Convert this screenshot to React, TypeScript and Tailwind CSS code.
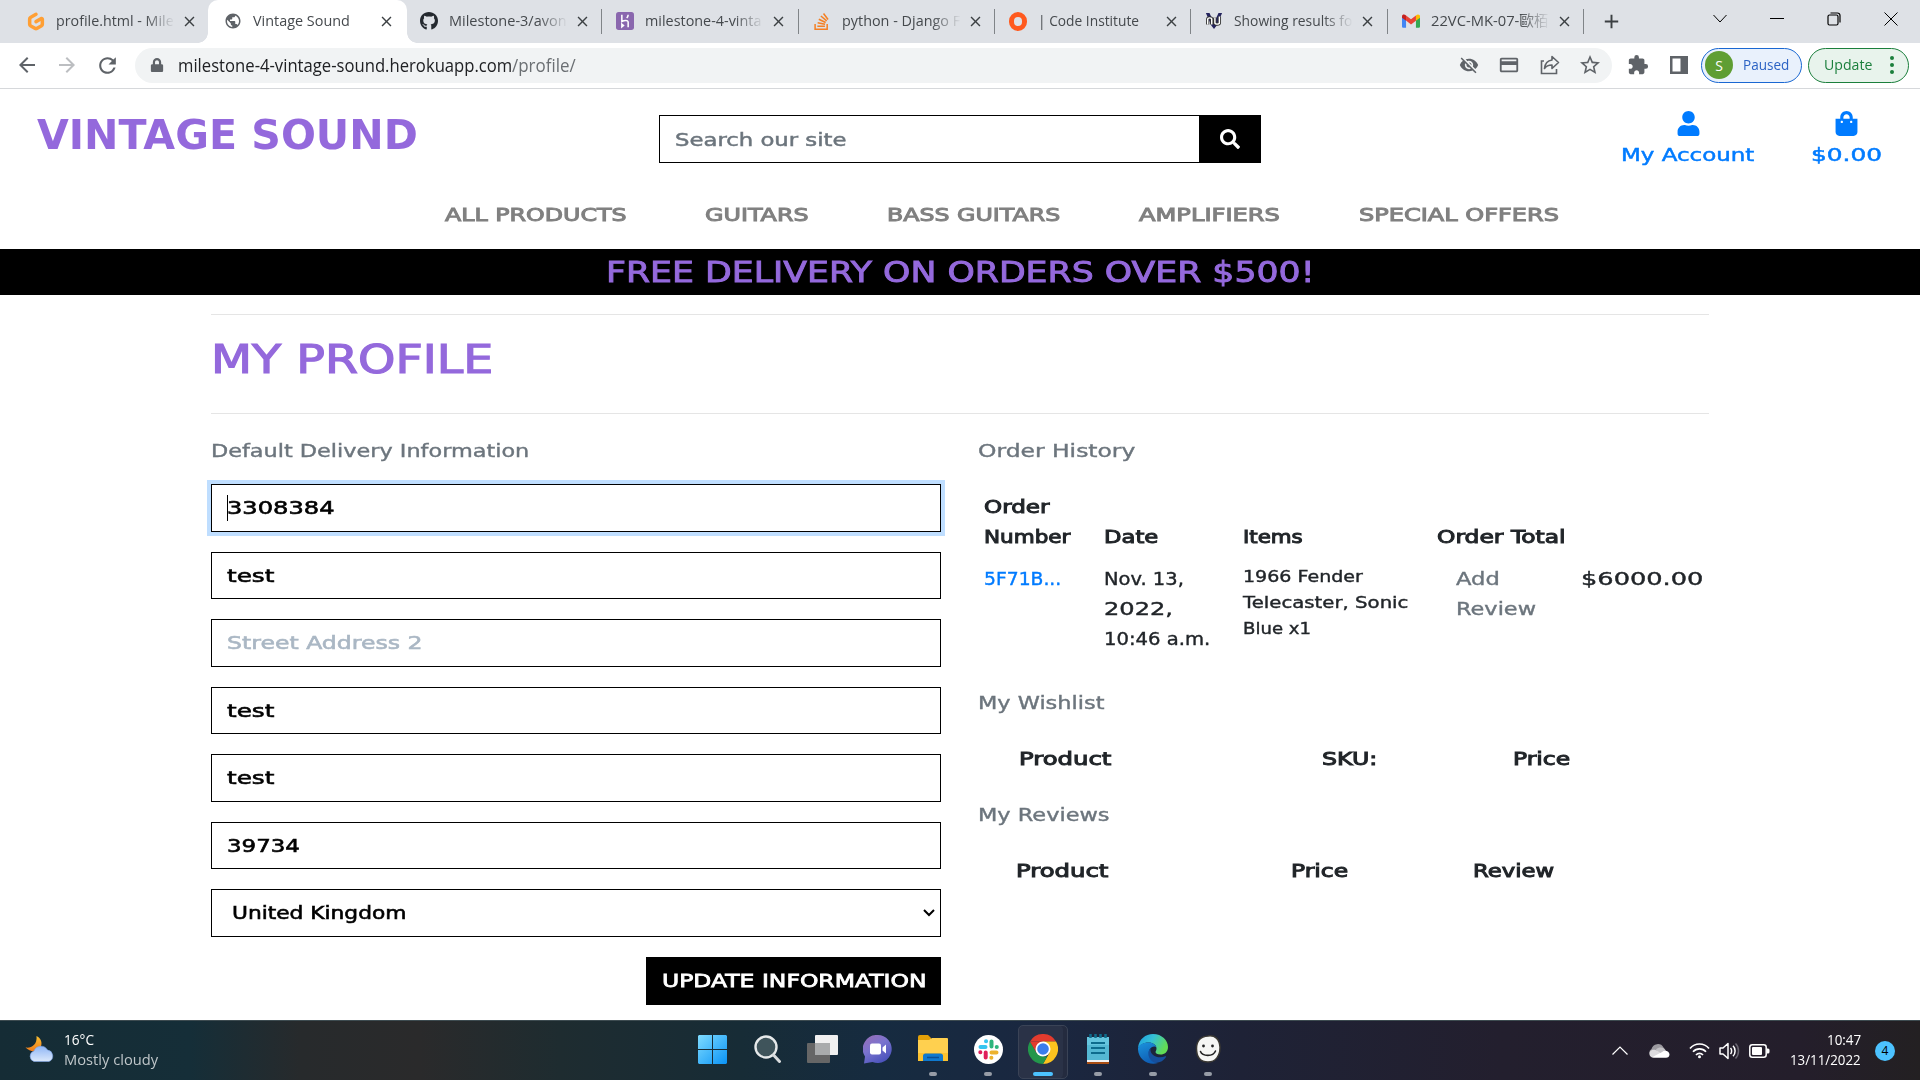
import { useLayoutEffect, useRef, useState, type ReactNode } from "react";
import { FaGithub, FaSearch, FaUser, FaShoppingBag, FaLock } from "react-icons/fa";
import { SiGitpod, SiStackoverflow } from "react-icons/si";
import {
  MdArrowBack,
  MdArrowForward,
  MdRefresh,
  MdVisibilityOff,
  MdStarBorder,
  MdExtension,
  MdPublic,
  MdClose,
  MdAdd,
  MdOutlineCreditCard,
} from "react-icons/md";

/* Single-line text fitted to a given width. */
function Fit({ w, className = "", children }: { w: number; className?: string; children: ReactNode }) {
  const ref = useRef<HTMLSpanElement>(null);
  const [scale, setScale] = useState(1);
  useLayoutEffect(() => {
    const measure = () => {
      if (ref.current) setScale(w / ref.current.offsetWidth);
    };
    measure();
    document.fonts?.ready.then(measure);
  }, [w]);
  return (
    <span className={`block shrink-0 whitespace-nowrap ${className}`} style={{ width: w }}>
      <span ref={ref} className="inline-block origin-left" style={{ transform: `scaleX(${scale})` }}>
        {children}
      </span>
    </span>
  );
}

function HerokuIcon() {
  return (
    <svg width="20" height="20" viewBox="0 0 20 20">
      <rect width="20" height="20" rx="3" fill="#8a67ae" />
      <path d="M6.500 3v7.500c2-1 7-2.400 7 1V17M6.500 13.500v3l1.800-1.500zM13.500 3c0 1.500-.6 2.600-1.600 3.600" fill="none" stroke="#fff" strokeWidth="1.700" />
    </svg>
  );
}

function VuIcon() {
  return (
    <svg width="20" height="20" viewBox="0 0 20 20">
      <path d="M1 1h4l5 11 5-11h4l-6 14-3 4-3-4z" fill="#25245e" />
      <path d="M3 14V8c0-2 4.500-2 4.500 0v6M11 6v6c0 2 5 2 5 0V5" fill="none" stroke="#333" strokeWidth="3.600" />
      <path d="M3 14V8c0-2 4.500-2 4.500 0v6M11 6v6c0 2 5 2 5 0V5" fill="none" stroke="#fff" strokeWidth="1.600" />
    </svg>
  );
}

function GmailIcon() {
  return (
    <svg width="20" height="16" viewBox="0 0 20 15">
      <path d="M0 2v11.500C0 14.300.7 15 1.500 15H4.500V6z" fill="#4285f4" />
      <path d="M20 2v11.500c0 .8-.7 1.500-1.500 1.500h-3V6z" fill="#34a853" />
      <path d="M15.500 1.300C17.500-.5 20 .3 20 2.300v1.500L15.500 7.200z" fill="#fbbc04" />
      <path d="M4.500 7V1.300L10 5.500l5.500-4.200V7.200L10 11.400z" fill="#ea4335" />
      <path d="M0 2.200C0 .2 2.500-.5 4.500 1.300V7.200L0 3.800z" fill="#c5221f" />
    </svg>
  );
}

const tabs: { title: string; w: number; icon: ReactNode; active?: boolean; line?: boolean; fade?: boolean }[] = [
  { title: "profile.html - Mile", w: 118, icon: <SiGitpod size={21} color="#ff9f34" />, fade: true },
  { title: "Vintage Sound", w: 97, icon: <MdPublic size={22} color="#5f6368" />, active: true },
  { title: "Milestone-3/avon", w: 118, icon: <FaGithub size={20} color="#24292f" />, line: true, fade: true },
  { title: "milestone-4-vinta", w: 116, icon: <HerokuIcon />, line: true, fade: true },
  { title: "python - Django F", w: 118, icon: <SiStackoverflow size={17} color="#f48024" />, line: true, fade: true },
  { title: "| Code Institute", w: 101, icon: <span className="size-[19px] rounded-full border-[5px] border-[#ff5a1f]" />, line: true },
  { title: "Showing results fo", w: 118, icon: <VuIcon />, line: true, fade: true },
  { title: "22VC-MK-07-歐栢", w: 118, icon: <GmailIcon />, line: true, fade: true },
];

function TabStrip() {
  return (
    <div className="flex h-[43px] bg-[#dee1e6] pl-[13px]">
      {tabs.map((t) => (
        <div
          key={t.title}
          className={
            t.active
              ? "relative -mx-px flex w-[198.400px] items-center rounded-t-[10px] bg-white pb-px pl-[16px]"
              : "relative flex w-[196.400px] items-center pb-px pl-[14px]"
          }
        >
          {t.active && (
            <>
              <span className="absolute bottom-0 -left-[10px] size-[10px] bg-[radial-gradient(circle_at_0_0,#dee1e6_9.500px,#fff_10px)]" />
              <span className="absolute -right-[10px] bottom-0 size-[10px] bg-[radial-gradient(circle_at_100%_0,#dee1e6_9.500px,#fff_10px)]" />
            </>
          )}
          <span className="flex w-[18px] shrink-0 items-center justify-center">{t.icon}</span>
          <span
            className={
              t.fade
                ? "ml-[11px] w-[119px] overflow-hidden pb-[3px] [mask-image:linear-gradient(to_right,#000_75%,transparent)]"
                : "ml-[11px] w-[119px] overflow-hidden pb-[3px]"
            }
          >
            <Fit w={t.w} className="text-[15px] leading-5 text-[#45494d]">
              {t.title}
            </Fit>
          </span>
          <MdClose size={17} className="ml-[6px] shrink-0 text-[#3c4043]" />
          {t.line && <span className="absolute top-[9px] right-0 h-[25px] w-px bg-[#808488]" />}
        </div>
      ))}
      <div className="flex w-[54px] items-center justify-center pb-px">
        <MdAdd size={23} className="text-[#3c4043]" />
      </div>
      <div className="ml-auto flex h-[37px] items-center pr-px text-black">
        <span className="flex w-[57px] justify-center">
          <svg width="14" height="9" viewBox="0 0 14 9" fill="none" stroke="currentColor">
            <path d="M.5 1 7 8l6.500-7" />
          </svg>
        </span>
        <span className="flex w-[57px] justify-center">
          <span className="h-px w-[14px] bg-black" />
        </span>
        <span className="flex w-[57px] justify-center">
          <svg width="14" height="14" viewBox="0 0 14 14" fill="none" stroke="currentColor" strokeWidth="1.200">
            <rect x="1" y="3" width="10" height="10" rx="1.500" />
            <path d="M3.500 1h7A2.500 2.500 0 0 1 13 3.500v7" />
          </svg>
        </span>
        <span className="flex w-[57px] justify-center">
          <svg width="14" height="14" viewBox="0 0 14 14" fill="none" stroke="currentColor">
            <path d="m.5.5 13 13M13.500.5l-13 13" />
          </svg>
        </span>
      </div>
    </div>
  );
}

function Toolbar() {
  return (
    <div className="flex h-[46px] items-center border-b border-[#d6d8db] pr-[10px] pb-px pl-[15px] text-[#5f6368]">
      <MdArrowBack size={24} className="shrink-0" />
      <MdArrowForward size={24} className="ml-4 shrink-0 text-[#bcbec1]" />
      <MdRefresh size={25} className="ml-4 shrink-0" />
      <div className="ml-[15px] flex h-[35px] w-[1477px] shrink-0 items-center rounded-full bg-[#f1f3f4] pr-[10px] pl-[15px]">
        <FaLock size={14} className="shrink-0" />
        <Fit w={334} className="ml-[14px] pb-px text-[18px] leading-6 text-[#202124]">
          milestone-4-vintage-sound.herokuapp.com
        </Fit>
        <Fit w={64} className="pb-px text-[18px] leading-6 text-[#6b6f73]">
          /profile/
        </Fit>
        <div className="ml-auto flex items-center">
          <MdVisibilityOff size={20} />
          <MdOutlineCreditCard size={22} className="ml-[19px]" />
          <svg width="20" height="20" viewBox="0 0 20 20" fill="none" stroke="currentColor" strokeWidth="1.600" className="ml-[20px]">
            <path d="M4 6H1.500v12.500h15V14" />
            <path d="M12 5V1.500l6.500 6-6.500 6V10c-4 0-6 1.200-7.500 3.500C5 9 7.500 5.500 12 5z" strokeLinejoin="round" />
          </svg>
          <MdStarBorder size={24} className="ml-[18px]" />
        </div>
      </div>
      <MdExtension size={22} className="ml-[15px] shrink-0" />
      <svg width="18" height="18" viewBox="0 0 18 18" className="ml-[21px] shrink-0" fill="currentColor">
        <path d="M0 0h18v18H0zM2.500 2.500v13h8v-13z" fillRule="evenodd" />
      </svg>
      <div className="ml-[13px] flex h-[35px] w-[101px] shrink-0 items-center rounded-full border border-[#1967d2] bg-[#e9f1fc] pl-[3px]">
        <span className="flex size-[28px] items-center justify-center rounded-full bg-[#5f9e33] text-[14px] text-white">S</span>
        <Fit w={46} className="ml-[10px] pb-[3px] text-[15px] leading-5 text-[#2b62c4]">
          Paused
        </Fit>
      </div>
      <div className="ml-[6px] flex h-[35px] w-[101px] shrink-0 items-center rounded-full border border-[#1b7f3c] bg-[#e8f3ec] pl-[15px] text-[#1b7f3c]">
        <Fit w={48} className="pb-[3px] text-[15px] leading-5">
          Update
        </Fit>
        <span className="ml-[18px] flex flex-col gap-[3px]">
          <span className="size-[4px] rounded-full bg-current" />
          <span className="size-[4px] rounded-full bg-current" />
          <span className="size-[4px] rounded-full bg-current" />
        </span>
      </div>
    </div>
  );
}

function SiteHeader() {
  return (
    <header className="h-[160px] font-['DejaVu_Sans',sans-serif]">
      <div className="flex h-[90px] items-start">
        <Fit w={381} className="mt-[21px] ml-[37px] text-[41px] leading-[50px] font-bold text-[#9469dc]">
          VINTAGE SOUND
        </Fit>
        <div className="mt-[26px] ml-[241px] flex h-[48px] w-[602px]">
          <div className="flex w-[540px] items-center border border-r-0 border-black pt-px pl-[15px]">
            <Fit w={171} className="text-[18.500px] leading-[30px] text-[#6c757d] [-webkit-text-stroke:0.500px]">
              Search our site
            </Fit>
          </div>
          <div className="flex w-[62px] items-center justify-center bg-black text-white">
            <FaSearch size={20} />
          </div>
        </div>
        <div className="mt-[22px] ml-[360px] flex flex-col items-center text-[#007bff]">
          <FaUser size={25} />
          <Fit w={134} className="mt-1 text-[18.500px] leading-[30px] [-webkit-text-stroke:0.500px]">
            My Account
          </Fit>
        </div>
        <div className="mt-[22px] ml-[56px] flex flex-col items-center text-[#007bff]">
          <FaShoppingBag size={25} />
          <Fit w={71} className="mt-1 text-[18.500px] leading-[30px] [-webkit-text-stroke:0.500px]">
            $0.00
          </Fit>
        </div>
      </div>
      <nav className="mt-[21px] ml-[445px] flex gap-[79px] text-[18.500px] leading-[30px] text-[#808080] [-webkit-text-stroke:1px]">
        <Fit w={181}>ALL PRODUCTS</Fit>
        <Fit w={103}>GUITARS</Fit>
        <Fit w={173}>BASS GUITARS</Fit>
        <Fit w={141}>AMPLIFIERS</Fit>
        <Fit w={200}>SPECIAL OFFERS</Fit>
      </nav>
    </header>
  );
}

function Field({ value, w, focused, muted }: { value: string; w: number; focused?: boolean; muted?: boolean }) {
  return (
    <div
      className={
        focused
          ? "flex h-[47.500px] items-center border border-black pl-[15px] shadow-[0_0_0_4px_#bfdeff]"
          : "flex h-[47.500px] items-center border border-black pl-[15px]"
      }
    >
      {focused && <span className="-mr-px h-[26px] w-px bg-black" />}
      <Fit w={w} className={muted ? "text-[#aab7c4] [-webkit-text-stroke:0.6px]" : "text-black [-webkit-text-stroke:0.6px]"}>
        {value}
      </Fit>
    </div>
  );
}

function Profile() {
  return (
    <main className="mx-auto w-[1498px] pt-[19px] font-['DejaVu_Sans',sans-serif] text-[18.500px] leading-[30px] text-[#212529]">
      <hr className="border-[#e5e5e5]" />
      <Fit w={283} className="mt-[20px] text-[38.500px] leading-[50px] text-[#9469dc] [-webkit-text-stroke:1.200px]">
        MY PROFILE
      </Fit>
      <hr className="mt-[28px] border-[#e5e5e5]" />
      <div className="mt-[21.600px] flex gap-[37px]">
        <section className="w-[730px]">
          <Fit w={318} className="text-[#6c757d] [-webkit-text-stroke:0.4px]">
            Default Delivery Information
          </Fit>
          <div className="mt-[18.900px] flex flex-col gap-5">
            <Field value="3308384" w={107} focused />
            <Field value="test" w={48} />
            <Field value="Street Address 2" w={195} muted />
            <Field value="test" w={48} />
            <Field value="test" w={48} />
            <Field value="39734" w={73} />
            <div className="flex h-[47.500px] items-center justify-between border border-black pr-[5px] pl-[20px]">
              <Fit w={175} className="text-black [-webkit-text-stroke:0.6px]">
                United Kingdom
              </Fit>
              <svg width="12" height="8" viewBox="0 0 12 8" fill="none" stroke="#000" strokeWidth="2">
                <path d="m1 1 5 5 5-5" />
              </svg>
            </div>
            <div className="flex h-[48px] w-[295px] items-center justify-center self-end bg-black text-white">
              <Fit w={264} className="[-webkit-text-stroke:0.8px]">
                UPDATE INFORMATION
              </Fit>
            </div>
          </div>
        </section>
        <section className="w-[731px]">
          <Fit w={157} className="text-[#6c757d] [-webkit-text-stroke:0.4px]">
            Order History
          </Fit>
          <div className="mt-[26px] grid grid-cols-[120px_138.500px_194.500px_143.500px_122px] items-end pl-[6px] [-webkit-text-stroke:1px]">
            <div>
              <Fit w={66}>Order</Fit>
              <Fit w={86}>Number</Fit>
            </div>
            <Fit w={54}>Date</Fit>
            <Fit w={60}>Items</Fit>
            <Fit w={129}>Order Total</Fit>
          </div>
          <div className="mt-3 grid grid-cols-[120px_138.500px_194.500px_143.500px_122px] items-start pl-[6px] [-webkit-text-stroke:0.4px]">
            <Fit w={77} className="text-[#007bff]">
              5F71B...
            </Fit>
            <div>
              <Fit w={80}>Nov. 13,</Fit>
              <Fit w={69}>2022,</Fit>
              <Fit w={106}>10:46 a.m.</Fit>
            </div>
            <div className="text-[16.500px] leading-[26px]">
              <Fit w={120}>1966 Fender</Fit>
              <Fit w={166}>Telecaster, Sonic</Fit>
              <Fit w={68}>Blue x1</Fit>
            </div>
            <div className="pl-[19px] text-[#6c757d]">
              <Fit w={44}>Add</Fit>
              <Fit w={80}>Review</Fit>
            </div>
            <Fit w={122}>$6000.00</Fit>
          </div>
          <Fit w={126} className="mt-[34px] text-[#6c757d] [-webkit-text-stroke:0.4px]">
            My Wishlist
          </Fit>
          <div className="mt-[26px] grid grid-cols-[302.500px_191px_auto] pl-[41px] [-webkit-text-stroke:1px]">
            <Fit w={92}>Product</Fit>
            <Fit w={55}>SKU:</Fit>
            <Fit w={57}>Price</Fit>
          </div>
          <Fit w={131} className="mt-[26px] text-[#6c757d] [-webkit-text-stroke:0.4px]">
            My Reviews
          </Fit>
          <div className="mt-[26px] grid grid-cols-[274.500px_182.500px_auto] pl-[38px] [-webkit-text-stroke:1px]">
            <Fit w={92}>Product</Fit>
            <Fit w={57}>Price</Fit>
            <Fit w={81}>Review</Fit>
          </div>
        </section>
      </div>
    </main>
  );
}

function WeatherIcon() {
  return (
    <svg width="30" height="28" viewBox="0 0 30 28" className="shrink-0">
      <defs>
        <linearGradient id="moon" x1="0" y1="0" x2="0" y2="1">
          <stop offset="0" stopColor="#f9c132" />
          <stop offset="1" stopColor="#f07b1a" />
        </linearGradient>
        <linearGradient id="cloud" x1="0" y1="0" x2="0" y2="1">
          <stop offset="0" stopColor="#8fb6f5" />
          <stop offset="1" stopColor="#dbe8fb" />
        </linearGradient>
      </defs>
      <path d="M11.500 1c5 2.500 6.500 8 3.500 12s-9.500 4.500-14.500-.5C6 13.500 12.500 10 11.500 1z" fill="url(#moon)" />
      <path d="M9 26.500a5.500 5.500 0 0 1 0-10.500 7.500 7.500 0 0 1 13.500-1 6 6 0 0 1 1.500 11.500z" fill="url(#cloud)" stroke="#7ea4e6" strokeWidth=".6" />
    </svg>
  );
}

const StartIcon = () => (
  <svg width="29" height="29" viewBox="0 0 29 29">
    <defs>
      <linearGradient id="win" x1="0" y1="0" x2="1" y2="1">
        <stop offset="0" stopColor="#7fdcff" />
        <stop offset="1" stopColor="#0a93f5" />
      </linearGradient>
    </defs>
    <path d="M1 0h13v14H0V1zM15 0h13l1 1v13H15zM0 15h14v14H1l-1-1zM15 15h14v13l-1 1H15z" fill="url(#win)" />
  </svg>
);

const SearchIcon = () => (
  <svg width="28" height="28" viewBox="0 0 28 28" fill="none">
    <circle cx="12" cy="12" r="10.500" fill="#3f545b" stroke="#e6e9ea" strokeWidth="2.400" />
    <path d="m19.500 20 6 6.500" stroke="#d8dbdd" strokeWidth="3" strokeLinecap="round" />
  </svg>
);

const TaskViewIcon = () => (
  <svg width="31" height="28" viewBox="0 0 31 28">
    <rect y="8" width="23" height="20" rx="1" fill="#666" />
    <rect x="8" width="23" height="20" rx="1" fill="#f0f0f0" />
    <rect x="8" y="8" width="15" height="12" fill="#a9abac" />
  </svg>
);

const ChatIcon = () => (
  <svg width="29" height="29" viewBox="0 0 29 29">
    <defs>
      <linearGradient id="chat" x1="0" y1="0" x2=".6" y2="1">
        <stop offset="0" stopColor="#9a6db5" />
        <stop offset=".5" stopColor="#7a73cf" />
        <stop offset="1" stopColor="#4b53bc" />
      </linearGradient>
    </defs>
    <path d="M14.500 0a14 14 0 1 1-5 27L1 28.500l1-7A14 14 0 0 1 14.500 0z" fill="url(#chat)" />
    <rect x="7" y="8.500" width="11" height="11" rx="2" fill="#fff" />
    <path d="M19.500 12.500 23 9.500v9l-3.500-3z" fill="#fff" />
  </svg>
);

const FolderIcon = () => (
  <svg width="30" height="28" viewBox="0 0 30 28">
    <path d="M0 2a2 2 0 0 1 2-2h8l3 3v6H0z" fill="#e3a008" />
    <path d="M0 5h11l3-2h15a1 1 0 0 1 1 1v22H0z" fill="#ffd04f" />
    <path d="M0 18h30v8H0z" fill="#fcc22f" />
    <path d="M5 26v-5a2.500 2.500 0 0 1 2.500-2.500h15A2.500 2.500 0 0 1 25 21v5z" fill="#0f79cf" />
    <path d="M9 22.500h12" stroke="#0a4f96" strokeWidth="1.500" />
  </svg>
);

const SlackIcon = () => (
  <svg width="29" height="29" viewBox="0 0 29 29" strokeWidth="4" strokeLinecap="round">
    <circle cx="14.500" cy="14.500" r="14.500" fill="#fff" />
    <path d="M6.500 12h5M12 6.200h.1" stroke="#36c5f0" />
    <path d="M17.500 6.500v5M22.700 12h.1" stroke="#2eb67d" />
    <path d="M17.500 17.500h5M17.300 22.700h.1" stroke="#ecb22e" />
    <path d="M11.700 17.500v5M6.300 17.300h.1" stroke="#e01e5a" />
  </svg>
);

const ChromeIcon = () => (
  <svg width="30" height="30" viewBox="0 0 30 30">
    <path d="M2 7.500A15 15 0 0 1 28 7.500H15z" fill="#e33b2e" />
    <path d="M28 7.500A15 15 0 0 1 15 30l6.500-11.200L15 7.500z" fill="#fcc31e" />
    <path d="M15 30A15 15 0 0 1 2 7.500l6.500 11.200 6.500 3.800h4.300z" fill="#23964b" />
    <path d="M2 7.500 8.500 18.700 15 7.500z" fill="#e33b2e" />
    <circle cx="15" cy="15" r="7.500" fill="#fff" />
    <circle cx="15" cy="15" r="5.800" fill="#3b7ded" />
  </svg>
);

const NotepadIcon = () => (
  <svg width="22" height="30" viewBox="0 0 22 30">
    <path d="M0 3h22v23H0z" fill="#54b8d3" />
    <path d="M0 3h22v8H0z" fill="#6ccbe2" opacity=".7" />
    <path d="M0 26h22v2H0z" fill="#f2f2f2" />
    <path d="M0 28h22v2H0z" fill="#a94e13" />
    <path d="M3.500 0v4M8.500 0v4M13.500 0v4M18.500 0v4" stroke="#0f6d8c" strokeWidth="2.500" />
    <path d="M4 9h14M4 14h14M4 19h14" stroke="#0e6c8d" strokeWidth="2" />
  </svg>
);

const EdgeIcon = () => (
  <svg width="30" height="30" viewBox="0 0 30 30">
    <defs>
      <linearGradient id="edgeTop" x1="0" y1="0" x2="1" y2=".4">
        <stop offset="0" stopColor="#1b9de2" />
        <stop offset=".5" stopColor="#35c1d6" />
        <stop offset="1" stopColor="#62dc55" />
      </linearGradient>
      <linearGradient id="edgeLow" x1="0" y1="0" x2=".4" y2="1">
        <stop offset="0" stopColor="#1b93dd" />
        <stop offset="1" stopColor="#0f5fb5" />
      </linearGradient>
    </defs>
    <path d="M0 14C1 5 7.500 0 15 0c9 0 15 6.500 15 13 0 5-3.500 7.500-7.500 7.500-3.500 0-5-1.500-5-2.500 0-.8 1-1.300 1-3.500 0-3.500-3.500-6-8-6-5 0-9 2.500-10.500 5.500z" fill="url(#edgeTop)" />
    <path d="M0 14c1.500-4 6-5.500 10.500-5.500 4 0 7 2 7.800 4.500-1.300-1.300-6.300-.5-7.300 4-.8 5 3.500 11 9 12C10 32-.5 25 0 14z" fill="url(#edgeLow)" />
    <path d="M12.500 14.500C9 17 9.500 25 16 28.500c5 1 9.500-1.500 12-5.500.5-.8-.2-1-.8-.7-6.500 3-15.700-.8-14.700-7.800z" fill="#164f9c" />
  </svg>
);

const SmileyIcon = () => (
  <svg width="28" height="28" viewBox="0 0 28 28">
    <path d="M14 1C21 0 25.500 4 26 12c.3 9-4.500 15-12 15S2.500 22 2.500 13.500C2.500 6 7 1.500 14 1z" fill="#f6f6f4" stroke="#3a3833" strokeWidth="1.500" />
    <path d="M6.500 16.500c2 5 12.500 5.500 15-.500" fill="none" stroke="#222" strokeWidth="1.600" strokeLinecap="round" />
    <circle cx="9.500" cy="11" r="1.400" fill="#222" />
    <circle cx="18.500" cy="11" r="1.400" fill="#222" />
  </svg>
);

const apps: { id: string; icon: ReactNode; state?: "open" | "active" }[] = [
  { id: "start", icon: <StartIcon /> },
  { id: "search", icon: <SearchIcon /> },
  { id: "taskview", icon: <TaskViewIcon /> },
  { id: "chat", icon: <ChatIcon /> },
  { id: "files", icon: <FolderIcon />, state: "open" },
  { id: "slack", icon: <SlackIcon />, state: "open" },
  { id: "chrome", icon: <ChromeIcon />, state: "active" },
  { id: "notepad", icon: <NotepadIcon />, state: "open" },
  { id: "edge", icon: <EdgeIcon />, state: "open" },
  { id: "smiley", icon: <SmileyIcon />, state: "open" },
];

function Taskbar() {
  return (
    <footer className="flex h-[60px] border-t border-[#3d4b50] bg-[linear-gradient(90deg,#152c35_0,#152e38_190px,#272a2c_300px,#2a2a2b_420px,#1e2c30_560px,#172c36_740px,#162b40_880px,#1a2740_1040px,#1e2236_1240px,#231f2e_1500px,#241e2b_1800px,#232022_1920px)] text-white">
      <div className="flex w-[685px] items-start pt-[14px] pl-[25px]">
        <WeatherIcon />
        <div className="ml-[9px] flex flex-col">
          <Fit w={30} className="-mt-[6px] text-[15px] leading-5">
            16°C
          </Fit>
          <Fit w={94} className="text-[15px] leading-5 text-[#bfc6c9]">
            Mostly cloudy
          </Fit>
        </div>
      </div>
      <div className="flex">
        {apps.map((a) => (
          <div key={a.id} className="flex h-full w-[55.100px] flex-col items-center">
            <div
              className={
                a.state === "active"
                  ? "mt-[4px] flex h-[54px] w-[50px] flex-col items-center rounded-[5px] border border-[#3a4356] bg-[#2a3247] shadow-[inset_-5px_0_0_-1px_#242b3f]"
                  : "mt-[5px] flex h-[53px] w-[50px] flex-col items-center"
              }
            >
              <div className="flex h-[46px] items-center">{a.icon}</div>
              {a.state === "open" && <span className="h-[4px] w-[8px] rounded-full bg-[#979ca6]" />}
              {a.state === "active" && <span className="h-[4px] w-[20px] rounded-full bg-[#4cc2ff]" />}
            </div>
          </div>
        ))}
      </div>
      <div className="ml-auto flex items-center pr-[25px]">
        <svg width="16" height="9" viewBox="0 0 16 9" fill="none" stroke="#fff" strokeWidth="1.200">
          <path d="m.5 8.500 7.500-7.500 7.500 7.500" />
        </svg>
        <svg width="21" height="14" viewBox="0 0 21 14" className="ml-[21px]">
          <path d="M4 12.500A4 4 0 0 1 2.500 5 6.500 6.500 0 0 1 14.500 3.500L18 8z" fill="#9c9aa0" />
          <path d="M7 5.500C10 2.500 15 3 16.500 6.500L9 10z" fill="#c3c2c6" />
          <path d="M3 13.500C-.5 12-.5 7 3.500 5.800c2-.5 4 .2 5.500 1.500l4 2.700z" fill="#dcdbde" />
          <path d="M3 13.200 13 8c3-2.500 7.500-.5 7.500 2.500 0 2-1.500 3.300-3.500 3.300H4.500z" fill="#fff" />
        </svg>
        <svg width="21" height="16" viewBox="0 0 21 16" fill="none" stroke="#fff" strokeWidth="1.700" className="ml-[19px]">
          <path d="M1 5.500c5-6 14-6 19 0M4 8.800c3.500-4 9.500-4 13 0M7 12c2-2.200 5-2.200 7 0" />
          <circle cx="10.500" cy="13.700" r="1.500" fill="#fff" stroke="none" />
        </svg>
        <svg width="21" height="18" viewBox="0 0 21 18" fill="none" stroke="#fff" strokeWidth="1.500" className="ml-[9px]">
          <path d="M1 6h3l5-4.500v15L4 12H1z" strokeLinejoin="round" />
          <path d="M11.500 6c1.500 1.500 1.500 4.500 0 6M14 3.800c2.800 2.800 2.800 7.600 0 10.400" />
          <path d="M16.500 1.500c4 4 4 11 0 15" stroke="#6a6671" />
        </svg>
        <svg width="21" height="14" viewBox="0 0 21 14" className="ml-[9px]">
          <rect x=".8" y=".8" width="16.400" height="12.400" rx="2.500" fill="none" stroke="#fff" strokeWidth="1.500" />
          <rect x="3" y="3" width="10" height="8" rx="1" fill="#fff" />
          <path d="M18 4.500h1a1.500 1.500 0 0 1 1.500 1.500v2A1.500 1.500 0 0 1 19 9.500h-1z" fill="#fff" />
        </svg>
        <div className="ml-[20px] flex flex-col items-end pb-[4px] text-[15px] leading-5">
          <Fit w={34}>10:47</Fit>
          <Fit w={71}>13/11/2022</Fit>
        </div>
        <span className="ml-[14px] flex size-5 items-center justify-center rounded-full bg-[#4cc2ff] text-[12px] leading-none text-black">4</span>
      </div>
    </footer>
  );
}

export default function App() {
  return (
    <div className="flex h-[1080px] w-[1920px] flex-col overflow-hidden bg-white font-['Open_Sans','Noto_Sans_CJK_TC',sans-serif]">
      <TabStrip />
      <Toolbar />
      <SiteHeader />
      <div className="flex h-[46px] shrink-0 items-center justify-center bg-black pt-[2px] font-['DejaVu_Sans',sans-serif]">
        <Fit w={709} className="text-[28.500px] leading-[40px] text-[#9469dc] [-webkit-text-stroke:0.9px]">
          FREE DELIVERY ON ORDERS OVER $500!
        </Fit>
      </div>
      <div className="h-[725px] shrink-0">
        <Profile />
      </div>
      <Taskbar />
    </div>
  );
}
